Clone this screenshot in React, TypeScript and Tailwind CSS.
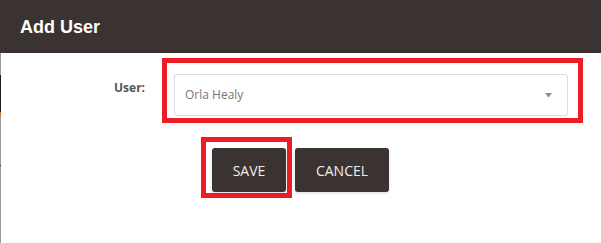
import React from "react";

export default function App() {
  return (
    <div className="w-[601px] h-[243px] bg-white overflow-hidden flex flex-col" style={{ fontFamily: '"Open Sans", "Noto Sans", sans-serif' }}>
      <div className="h-[53px] shrink-0 bg-[#3b3331] flex items-center pl-[20px]">
        <h1 className="text-white font-bold text-[18px] leading-none" style={{ fontFamily: '"Liberation Sans", Arial, sans-serif' }}>
          Add User
        </h1>
      </div>
      <div className="flex-1 flex">
        <div className="w-px flex flex-col shrink-0">
          <div className="h-[22px] bg-[#9a9a9a]" />
          <div className="h-[37px] bg-[#1e1e1e]" />
          <div className="h-[3px] bg-[#c8662c]" />
          <div className="h-[50px] bg-[#9a9a9a]" />
          <div className="h-px bg-[#333]" />
          <div className="flex-1 bg-[#9a9a9a]" />
        </div>
        <div className="flex-1 flex flex-col pt-[5px]">
          <div className="flex">
            <label className="w-[144px] text-right pt-[22px] text-[12px] leading-[16px] font-bold text-[#555]">
              User:
            </label>
            <div className="ml-[17px] w-[421px] border-[5px] border-[#ee1c25] pt-[11px] pl-[7px] pr-[10px] pb-[2px]">
              <div className="h-[42px] border border-[#dcdcdc] rounded-[3px] flex items-center justify-between pl-[10px] pr-[15px]">
                <span className="text-[12px] text-[#777]">Orla Healy</span>
                <svg width="7" height="5" viewBox="0 0 7 5">
                  <path d="M0 0 H7 L3.5 4.5 Z" fill="#8a8f94" />
                </svg>
              </div>
            </div>
          </div>
          <div className="flex mt-[14px] pl-[200px]">
            <div className="border-[5px] border-[#ee1c25] pt-[6px] pl-[6px] pr-[1px] pb-[1px]">
              <button className="h-[44px] w-[74px] bg-[#3b3331] rounded-[3px] text-[14px] text-[#eeeeee] shadow-[0_1px_3px_rgba(0,0,0,0.15)]">
                SAVE
              </button>
            </div>
            <div className="ml-[3px] pt-[11px]">
              <button className="h-[44px] w-[94px] bg-[#3b3331] rounded-[3px] text-[14px] text-[#eeeeee] shadow-[0_1px_3px_rgba(0,0,0,0.15)]">
                CANCEL
              </button>
            </div>
          </div>
        </div>
      </div>
    </div>
  );
}
